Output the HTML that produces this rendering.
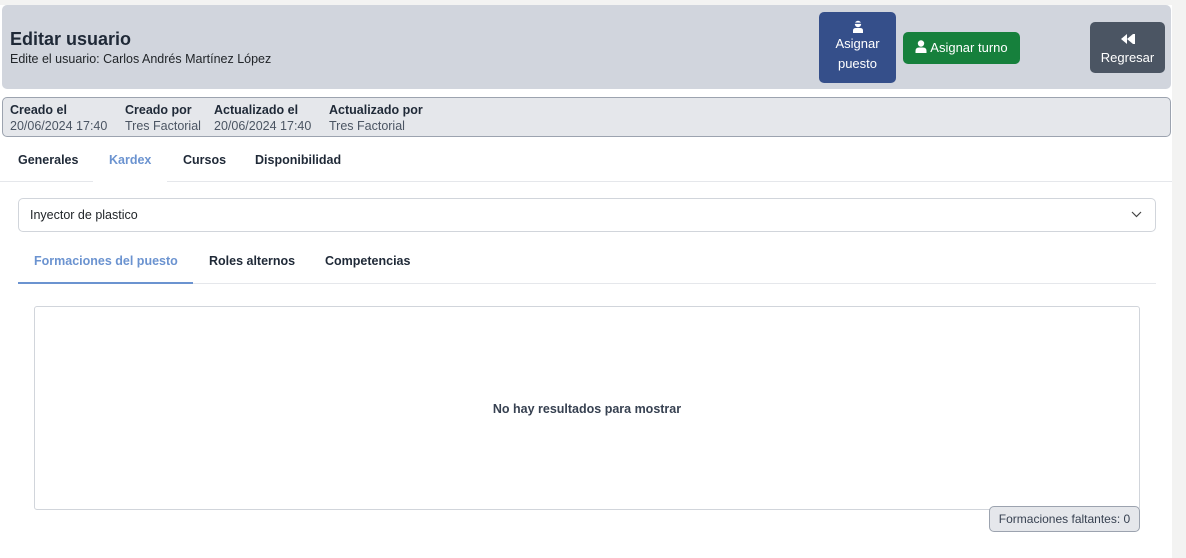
<!DOCTYPE html>
<html><head><meta charset="utf-8"><style>
*{box-sizing:border-box;margin:0;padding:0}
body{width:1186px;height:558px;background:#f3f3f2;font-family:"Liberation Sans",sans-serif;color:#212529;position:relative;overflow:hidden}
.main{position:absolute;left:0;top:0;width:1172px;height:558px;background:#fff}
.top{position:absolute;left:0;top:0;width:1172px;height:5px;background:#f3f3f2}
.hdr{position:absolute;left:2px;top:5px;width:1169px;height:84px;background:#d1d5dd;border-radius:5px}
.hdr h1{position:absolute;left:8px;top:24px;font-size:18px;font-weight:bold;color:#1f2937}
.hdr .sub{position:absolute;left:8px;top:47px;font-size:12.5px;color:#212529}
.btn{position:absolute;color:#fff;font-size:13px;text-align:center;border-radius:5px;line-height:18px}
.info{position:absolute;left:2px;top:97px;width:1169px;height:40px;background:#e5e7eb;border:1px solid #9ca3af;border-radius:5px}
.info div{position:absolute;top:4px;font-size:12.5px;line-height:16px}
.info b{display:block;color:#1f2937}
.info span{color:#4b5563}
.tab{position:absolute;font-size:12.5px;font-weight:bold;color:#1f2937}
.line{position:absolute;background:#e5e7eb;height:1px}
</style></head><body>
<div class="main"></div><div class="top"></div>
<div class="hdr">
<h1>Editar usuario</h1>
<div class="sub">Edite el usuario: Carlos Andrés Martínez López</div>
<div class="btn" style="left:817px;top:7px;width:77px;height:71px;background:#354f8a;padding-top:8px;line-height:20px">
<svg width="12" height="13" viewBox="0 0 12 13" style="display:block;margin:0 auto 1px"><circle cx="6" cy="4" r="3.2" fill="#fff"/><rect x="2.5" y="2.6" width="7" height="1.3" fill="#354f8a"/><path d="M1 13v-2.5Q1 8 4 8h4q3 0 3 2.5V13z" fill="#fff"/></svg>Asignar<br>puesto</div>
<div class="btn" style="left:901px;top:27px;width:117px;height:32px;background:#16803c;line-height:32px">
<svg width="12" height="13" viewBox="0 0 12 13" style="vertical-align:-1px"><circle cx="6" cy="3.5" r="3.2" fill="#fff"/><path d="M0.5 13v-2Q0.5 7.5 4 7.5h4q3.5 0 3.5 3.5v2z" fill="#fff"/></svg> Asignar turno</div>
<div class="btn" style="left:1088px;top:17px;width:75px;height:51px;background:#4b5563;padding-top:9px">
<svg width="14" height="10" viewBox="0 0 14 10"><path d="M0 5l6-5v10zM6 5l6-5v10z" fill="#fff"/><rect x="12" y="0" width="2" height="10" fill="#fff"/></svg><br>Regresar</div>
</div>
<div class="info">
<div style="left:7px"><b>Creado el</b><span>20/06/2024 17:40</span></div>
<div style="left:122px"><b>Creado por</b><span>Tres Factorial</span></div>
<div style="left:211px"><b>Actualizado el</b><span>20/06/2024 17:40</span></div>
<div style="left:326px"><b>Actualizado por</b><span>Tres Factorial</span></div>
</div>
<div class="line" style="left:0;top:181px;width:1172px"></div>
<div style="position:absolute;left:93px;top:178px;width:74px;height:5px;background:#fff"></div>
<div class="tab" style="left:18px;top:153px">Generales</div>
<div class="tab" style="left:109px;top:153px;color:#6b93d0">Kardex</div>
<div class="tab" style="left:183px;top:153px">Cursos</div>
<div class="tab" style="left:255px;top:153px">Disponibilidad</div>
<div style="position:absolute;left:18px;top:198px;width:1138px;height:34px;border:1px solid #d1d5db;border-radius:5px;font-size:12.5px;line-height:32px;padding-left:11px;color:#212529">Inyector de plastico
<svg style="position:absolute;right:13px;top:12px" width="11" height="7" viewBox="0 0 11 7"><path d="M1 1l4.5 4.5L10 1" fill="none" stroke="#444" stroke-width="1.2"/></svg></div>
<div class="tab" style="left:34px;top:254px;color:#6b93d0">Formaciones del puesto</div>
<div class="tab" style="left:209px;top:254px">Roles alternos</div>
<div class="tab" style="left:325px;top:254px">Competencias</div>
<div class="line" style="left:18px;top:283px;width:1138px"></div>
<div style="position:absolute;left:18px;top:282px;width:175px;height:2px;background:#6b93d0"></div>
<div style="position:absolute;left:34px;top:306px;width:1106px;height:204px;border:1px solid #d1d5db;border-radius:3px;text-align:center;line-height:204px;font-size:12.5px;font-weight:bold;color:#374151">No hay resultados para mostrar</div>
<div style="position:absolute;left:989px;top:506px;width:151px;height:26px;background:#e5e7eb;border:1px solid #9ca3af;border-radius:5px;font-size:12px;line-height:24px;text-align:center;color:#374151">Formaciones faltantes: 0</div>
</body></html>
